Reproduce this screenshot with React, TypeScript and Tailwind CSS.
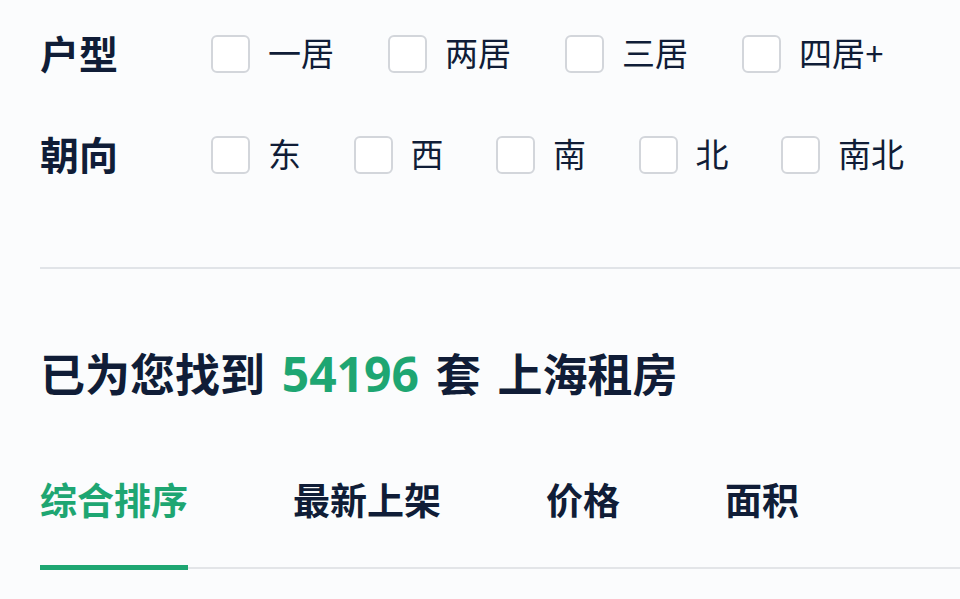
import React from 'react';

const font = { fontFamily: '"Noto Sans", "Noto Sans CJK SC", sans-serif' };

const filters = [
  { label: '户型', options: ['一居', '两居', '三居', '四居+'], gap: 'gap-[54px]' },
  { label: '朝向', options: ['东', '西', '南', '北', '南北'], gap: 'gap-[52.5px]' },
];

const tabs = ['综合排序', '最新上架', '价格', '面积'];

function Option({ text }: { text: string }) {
  return (
    <label className="flex items-center gap-[18px]">
      <span className="w-[39px] h-[38px] rounded-[6px] border-2 border-[#d3d6db] bg-white" />
      <span className="text-[33px] leading-none text-[#101d37]">{text}</span>
    </label>
  );
}

export default function App() {
  return (
    <div className="min-h-[599px] w-[960px] bg-[#fbfcfd] pl-10 pt-[3px] overflow-hidden" style={font}>
      {filters.map((f) => (
        <div key={f.label} className="flex items-center h-[101px]">
          <div className="w-[171px] text-[39px] font-bold leading-none text-[#101d37]">{f.label}</div>
          <div className={`flex items-center ${f.gap}`}>
            {f.options.map((o) => (
              <Option key={o} text={o} />
            ))}
          </div>
        </div>
      ))}

      <div className="mt-[62px] h-[2px] bg-[#e1e4e8]" />

      <h2 className="mt-[81px] text-[45px] font-bold leading-none text-[#101d37] whitespace-nowrap [word-spacing:5px]">
        已为您找到 <span className="text-[48px] text-[#1ea672]">54196</span> 套 上海租房
      </h2>

      <div className="mt-[84px] flex items-start gap-[105px] border-b-2 border-[#e3e5e8]">
        {tabs.map((t, i) => (
          <div
            key={t}
            className={
              i === 0
                ? 'pb-[46px] -mb-[3px] border-b-[5px] border-[#1ea672] text-[37px] font-bold leading-none text-[#1ea672]'
                : 'pb-[46px] -mb-[3px] border-b-[5px] border-transparent text-[37px] font-bold leading-none text-[#101d37]'
            }
          >
            {t}
          </div>
        ))}
      </div>
    </div>
  );
}
